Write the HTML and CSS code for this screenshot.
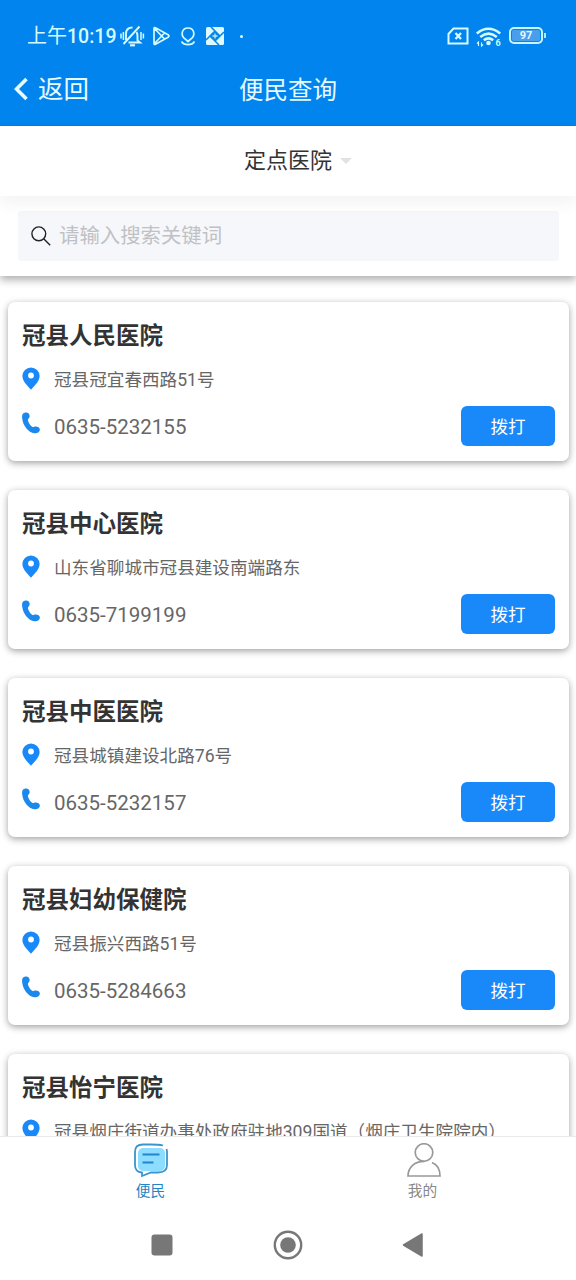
FILE: index.html
```
<!DOCTYPE html>
<html lang="zh-CN">
<head>
<meta charset="utf-8">
<title>便民查询</title>
<link rel="stylesheet" href="styles.css">
</head>
<body>
<svg class="defs" width="0" height="0">
  <symbol id="pin" viewBox="0 0 18 23"><path fill-rule="evenodd" d="M9 .5A8.6 8.6 0 0 0 .4 9.1C.4 14 4.700 18.200 9 22.700C13.300 18.200 17.600 14 17.600 9.100A8.600 8.600 0 0 0 9 .5ZM9 5.600a2.900 2.900 0 1 1 0 5.800a2.900 2.900 0 0 1 0-5.800Z"/></symbol>
  <symbol id="phone" viewBox="0 0 18 22"><path d="M.7 2C2 .3 5 0 6.500 1.300C7.900 2.600 8 5 6.900 6.200C6 7.100 5.700 7.600 6 8.700C6.800 11.200 8.300 13.400 10.200 14.800C11.200 15.500 11.800 14.900 13 14.600C15.200 14.200 17.800 15.500 17.900 17.600C18 20 15.300 21.700 12.500 21.300C6.200 20.500.9 13.500.2 6.500C0 4.800 0 3.100.7 2Z"/></symbol>
</svg>
<div class="app">
  <header class="top">
    <div class="status">
      <span class="time">上午<b>10:19</b></span>
      <svg class="notices" width="126" height="24" viewBox="0 0 126 24" fill="none" stroke="#d4fbff" stroke-width="1.900">
        <path d="M3.500 20L19.500 2.500M6 16V10C6 6 8.500 3.500 12.500 3.500M16.500 8C17.500 9.500 17.500 11 17.500 12.500V16.500L20 18.500H8.500"/><path d="M1 9.500v5M3.400 8v8M21 8v8M23.400 9.500v5" stroke-width="1.500"/><path d="M10 21.300h5" stroke-width="2.200"/>
        <path stroke-linejoin="round" d="M34 4.500Q34 3 35.500 3.800L48.500 11Q49.500 12 48.500 13L35.500 20.200Q34 21 34 19.500ZM34.500 4.500L44.500 15M34.500 19.500L44.500 9" stroke-width="1.700"/>
        <path d="M65.800 15.500C60 12 61.500 4 68 4S76 12 70.200 15.500L68 17.500ZM61.500 17.500C64 21.700 72 21.700 74.500 17.500" stroke-width="1.700"/>
        <rect x="86" y="3" width="18" height="18" rx="1.500" fill="#dcfaff" stroke="none"/>
        <path d="M95 7L100 12L95 17L90 12Z" fill="#0787e9" stroke="none"/><path d="M91 3L100 12M104 8L95 17M99 21L90 12M86 16L95 7" stroke="#0787e9" stroke-width="1.600"/><path d="M95 9.500v5M92.500 12h5" stroke="#b4efff" stroke-width="1.300"/>
        <circle cx="121.500" cy="12.500" r="1.500" fill="#dcfaff" stroke="none"/>
      </svg>
      <div class="signals">
        <svg width="22" height="18" viewBox="0 0 22 18" fill="none" stroke="#d4fbff" stroke-width="2"><path d="M6.500 1.500H20.500V16.500H1.500V7Z"/><path d="M8.500 6L14 12M14 6L8.500 12" stroke-width="2.300"/></svg>
        <svg class="wifi" width="26" height="21" viewBox="0 0 26 21" fill="none" stroke="#d4fbff" stroke-width="2.500"><path d="M.8 6.500Q12.500-3 24.200 6.500M4.200 10Q12.500 3.300 20.800 10M7.800 13.300Q12.500 9.500 17.200 13.300"/><circle cx="12.500" cy="16" r="2.300" fill="#d4fbff" stroke="none"/><path d="M2.500 19V15L1 16.500M5.500 15.500V19L7 17.500" stroke-width="1.100"/><text class="wifi-gen" x="19.500" y="19">6</text></svg>
        <span class="battery"><span class="level">97</span></span>
      </div>
    </div>
    <nav class="nav">
      <a class="back"><svg width="14" height="24" viewBox="0 0 14 24" fill="none" stroke="#e5fbff" stroke-width="3.600"><path d="M12.500 2L2.500 12L12.500 22"/></svg>返回</a>
      <h1>便民查询</h1>
      <span></span>
    </nav>
  </header>
  <div class="filter"><span>定点医院</span><i class="caret"></i></div>
  <div class="search">
    <label class="field"><svg width="20" height="20" viewBox="0 0 20 20" fill="none" stroke="#222" stroke-width="1.400"><circle cx="7.800" cy="7.800" r="6.900"/><path d="M12.700 12.700L19.200 19.200"/></svg><span>请输入搜索关键词</span></label>
  </div>
  <main class="list">
    <article class="card"><h2>冠县人民医院</h2><p class="address"><svg class="pin"><use href="#pin"/></svg><span>冠县冠宜春西路51号</span></p><div class="contact"><svg class="phone"><use href="#phone"/></svg><span>0635-5232155</span><button>拨打</button></div></article>
    <article class="card"><h2>冠县中心医院</h2><p class="address"><svg class="pin"><use href="#pin"/></svg><span>山东省聊城市冠县建设南端路东</span></p><div class="contact"><svg class="phone"><use href="#phone"/></svg><span>0635-7199199</span><button>拨打</button></div></article>
    <article class="card"><h2>冠县中医医院</h2><p class="address"><svg class="pin"><use href="#pin"/></svg><span>冠县城镇建设北路76号</span></p><div class="contact"><svg class="phone"><use href="#phone"/></svg><span>0635-5232157</span><button>拨打</button></div></article>
    <article class="card"><h2>冠县妇幼保健院</h2><p class="address"><svg class="pin"><use href="#pin"/></svg><span>冠县振兴西路51号</span></p><div class="contact"><svg class="phone"><use href="#phone"/></svg><span>0635-5284663</span><button>拨打</button></div></article>
    <article class="card"><h2>冠县怡宁医院</h2><p class="address"><svg class="pin"><use href="#pin"/></svg><span>冠县烟庄街道办事处政府驻地309国道（烟庄卫生院院内）</span></p></article>
  </main>
  <footer class="tabs">
    <a class="tab active"><svg width="36" height="36" viewBox="0 0 36 36" fill="none"><rect x="5" y="5" width="27" height="23" rx="5" fill="#8cddff"/><path d="M30 2.500Q26 1.500 18 1.500H10Q2 1.500 2 9V22Q2 29 9 29.500V33L18 29.500H25Q34 29.500 34 22V9Q34 7.500 33.500 6" stroke="#3b94cc" stroke-width="1.800"/><path d="M9.500 11.500H26.500M9.500 19.500H20.500" stroke="#2685c8" stroke-width="2"/></svg>便民</a>
    <a class="tab"><svg width="36" height="36" viewBox="0 0 36 36" fill="none" stroke="#999" stroke-width="1.700"><circle cx="18" cy="9.500" r="8.800"/><path d="M18 18.300C9 18.300 2 24 2 33H34C34 26 31 21.500 26 19.500"/></svg><span>我的</span></a>
  </footer>
  <div class="system">
    <svg width="22" height="22"><rect x=".5" y=".5" width="21" height="21" rx="3" fill="#777"/></svg>
    <svg width="30" height="30"><circle cx="15" cy="15" r="13.200" fill="none" stroke="#777" stroke-width="2.400"/><circle cx="15" cy="15" r="7.800" fill="#777"/></svg>
    <svg width="22" height="26"><path d="M1.500 13L20 2V24Z" fill="#777" stroke="#777" stroke-width="1.500" stroke-linejoin="round"/></svg>
  </div>
</div>
</body>
</html>
```
FILE: styles.css
```
* { box-sizing: border-box; }
body { margin: 0; background: #fff; color: #333; font-family: Roboto, "Noto Sans CJK SC", sans-serif; }
svg { flex: none; display: block; }
h1, h2, p { margin: 0; }
.defs { display: none; }
.app { width: 576px; height: 1280px; display: flex; flex-direction: column; overflow: hidden; }
.top { height: 126px; flex: none; background: #0184ee; color: #e7faff; border-bottom: 1px solid #1679c9; }
.status { height: 56px; display: flex; align-items: center; padding: 17px 30px 0 27px; }
.time { width: 93px; font-size: 20px; line-height: 30px; white-space: nowrap; color: #d4fbff; }
.time b { font-weight: 500; font-size: 19.500px; }
.notices { margin-top: -2px; }
.signals { margin-left: auto; display: flex; align-items: center; gap: 7px; padding-bottom: 1px; }
.wifi { margin-top: 2px; }
.wifi-gen { font: 700 9px Roboto, sans-serif; fill: #d4fbff; stroke: none; }
.battery { display: flex; align-items: center; margin-top: -1px; }
.battery::after { content: ""; width: 2px; height: 5px; margin-left: 1px; background: #a8edff; }
.level { width: 34px; height: 17px; border: 2px solid #c6f5ff; border-radius: 5px; box-shadow: inset 0 0 0 1px #0184ee; background: #499fee; font: 700 11px/13px Roboto, sans-serif; text-align: center; }
.nav { display: grid; grid-template-columns: 1fr auto 1fr; align-items: center; height: 68px; padding: 0 14px; }
.nav h1 { font-size: 24.500px; font-weight: 400; line-height: 36px; padding-top: 2px; }
.back { display: flex; align-items: center; gap: 10px; margin-top: -2px; font-size: 25.500px; line-height: 36px; }
.filter { position: relative; height: 70px; flex: none; display: flex; align-items: center; justify-content: center; padding: 0 0 2px 20px; gap: 8px; background: #fff; font-size: 22px; box-shadow: 0 7px 16px #0000000d; }
.filter span { padding-bottom: 5px; }
.caret { border: 6px solid transparent; border-top-color: #e2e2e2; border-bottom: 0; width: 0; margin-top: 2px; }
.search { height: 80px; flex: none; padding: 15px 17px 15px 18px; box-shadow: 0 4px 8px #00000050; }
.field { display: flex; align-items: center; gap: 8px; height: 50px; padding-left: 13px; border-radius: 3px; background: #f6f7fa; color: #bfc1c5; font-size: 20.400px; line-height: 30px; }
.list { flex: 1; min-height: 0; overflow: hidden; padding: 26px 7px 0 7.500px; display: flex; flex-direction: column; gap: 29px; }
.card { flex: none; height: 159px; padding: 15px 14px 0 14.500px; border-radius: 7px; background: #fff; box-shadow: 0 2px 7px #00000060; }
.card h2 { font-size: 23.500px; line-height: 38px; font-weight: 700; }
.address { display: flex; align-items: center; height: 48px; gap: 14px; color: #666; font-size: 17.600px; white-space: nowrap; }
.address span { padding-bottom: 2px; }
.pin { width: 18px; height: 23px; fill: #1989fa; margin-top: -1px; }
.contact { height: 46px; display: flex; align-items: center; gap: 14px; color: #666; font-size: 20.500px; }
.contact span { padding-top: 2px; }
.phone { width: 18px; height: 22px; fill: #1b88ee; margin-top: -6px; }
.contact button { width: 94px; height: 40px; margin-left: auto; padding: 2px 0 0; border: 0; border-radius: 6px; background: #1989fa; color: #fff; font: 17.600px/38px Roboto, "Noto Sans CJK SC", sans-serif; }
.tabs { flex: none; height: 74px; border-top: 1px solid #e9e9e9; display: grid; grid-template-columns: 301px 1fr; background: #fff; }
.tab { display: flex; flex-direction: column; align-items: center; padding-top: 6px; color: #888; font-size: 14.700px; line-height: 22px; gap: 1px; }
.tab:last-child { padding-right: 30px; }
.tab span { padding-right: 2px; }
.active { color: #2385c4; }
.system { flex: none; height: 70px; display: flex; justify-content: space-between; align-items: center; padding: 0 152px 0 151px; background: #fff; }
```
